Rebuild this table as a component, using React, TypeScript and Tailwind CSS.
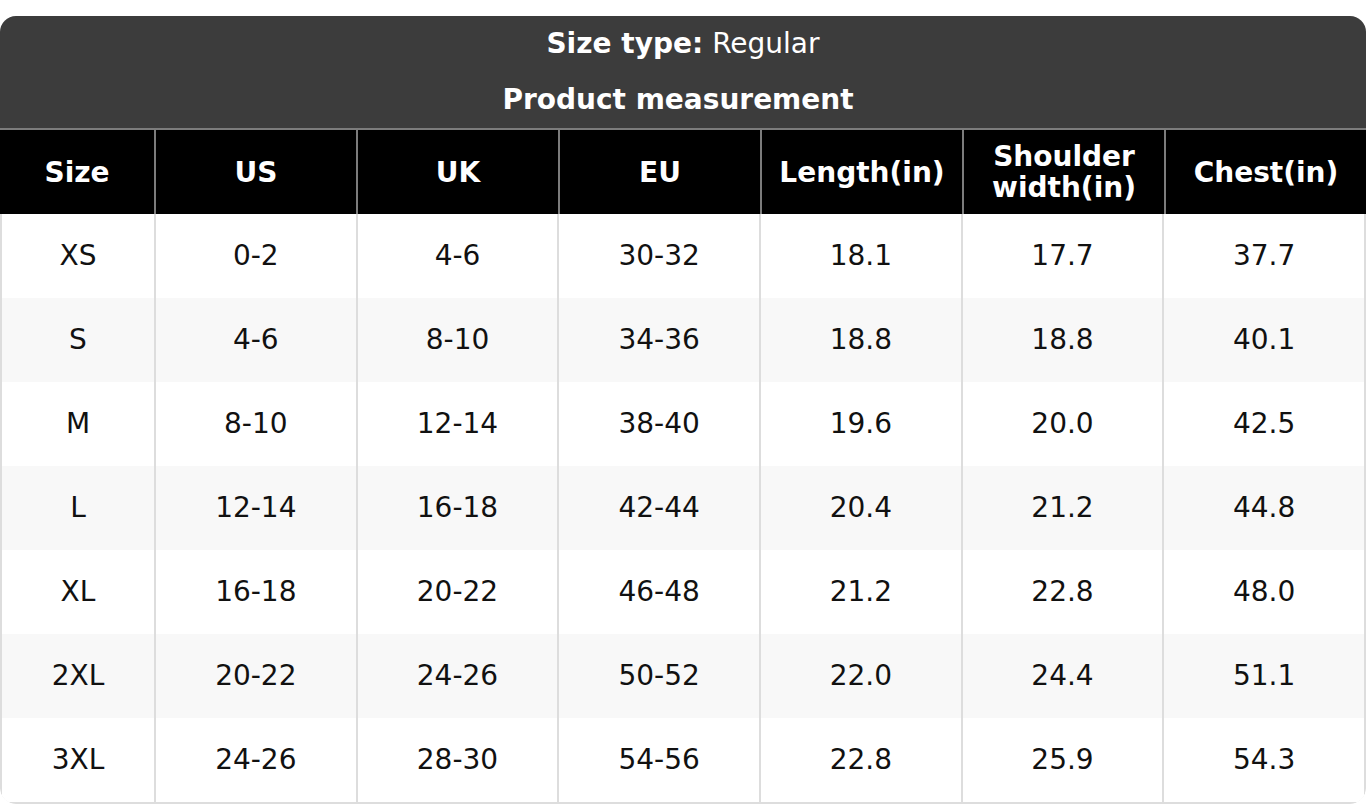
const columns = ['Size', 'US', 'UK', 'EU', 'Length(in)', 'Shoulder width(in)', 'Chest(in)']

const rows = [
  ['XS', '0-2', '4-6', '30-32', '18.1', '17.7', '37.7'],
  ['S', '4-6', '8-10', '34-36', '18.8', '18.8', '40.1'],
  ['M', '8-10', '12-14', '38-40', '19.6', '20.0', '42.5'],
  ['L', '12-14', '16-18', '42-44', '20.4', '21.2', '44.8'],
  ['XL', '16-18', '20-22', '46-48', '21.2', '22.8', '48.0'],
  ['2XL', '20-22', '24-26', '50-52', '22.0', '24.4', '51.1'],
  ['3XL', '24-26', '28-30', '54-56', '22.8', '25.9', '54.3'],
]

export default function App() {
  return (
    <div className="min-h-[804px] bg-white pt-[16px] font-['DejaVu_Sans',sans-serif] text-[28px]">
      <div className="overflow-hidden rounded-[16px]">
        {/* Title band */}
        <div className="bg-[#3c3c3c] text-white">
          <div className="flex h-[56px] items-center justify-center">
            <span className="font-bold">Size type:</span>
            <span className="ml-[9px]">Regular</span>
          </div>
          <div className="flex h-[56px] items-center justify-center pr-[10px] font-bold">
            Product measurement
          </div>
        </div>

        {/* Column headers */}
        <div className="grid h-[86px] grid-cols-[154px_repeat(6,minmax(0,1fr))] border-t-2 border-[#7c7c7c] bg-black font-bold text-white">
          {columns.map((col, i) => (
            <div
              key={col}
              className={`flex items-center justify-center px-2 text-center leading-[31px] ${i > 0 ? 'border-l-2 border-[#7c7c7c]' : ''}`}
            >
              {col === 'Shoulder width(in)' ? (
                <span>
                  Shoulder
                  <br />
                  width(in)
                </span>
              ) : (
                col
              )}
            </div>
          ))}
        </div>

        {/* Body */}
        <div className="rounded-b-[16px] border-x-2 border-b-2 border-[#dddddd] text-[#111111]">
          {rows.map((row, r) => (
            <div
              key={row[0]}
              className={`grid h-[84px] grid-cols-[152px_repeat(6,minmax(0,1fr))] ${r % 2 === 1 ? 'bg-[#f8f8f8]' : 'bg-white'}`}
            >
              {row.map((cell, i) => (
                <div
                  key={i}
                  className={`flex items-center justify-center ${i > 0 ? 'border-l-2 border-[#dddddd]' : ''}`}
                >
                  {cell}
                </div>
              ))}
            </div>
          ))}
        </div>
      </div>
    </div>
  )
}
